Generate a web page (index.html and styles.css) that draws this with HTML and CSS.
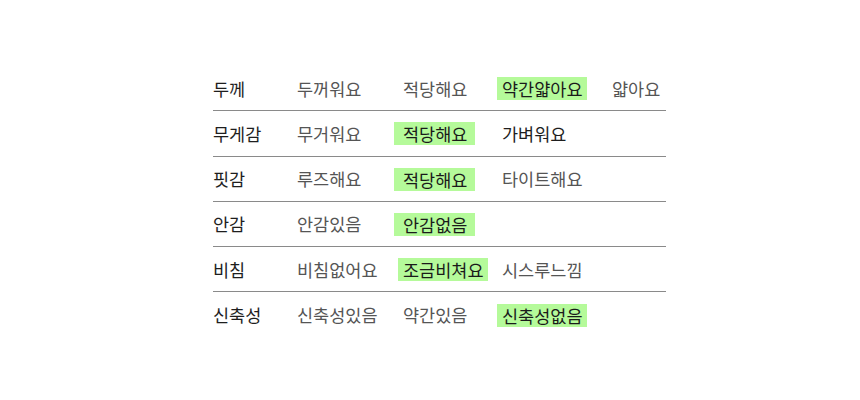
FILE: index.html
```html
<!DOCTYPE html>
<html lang="ko">
<head>
<meta charset="utf-8">
<link rel="stylesheet" href="styles.css">
</head>
<body>
<div class="page">
  <div class="table">
    <div class="row">
      <div class="cell label">두께</div>
      <div class="cell">두꺼워요</div>
      <div class="cell">적당해요</div>
      <div class="cell"><span class="hl">약간얇아요</span></div>
      <div class="cell">얇아요</div>
    </div>
    <div class="row">
      <div class="cell label">무게감</div>
      <div class="cell">무거워요</div>
      <div class="cell"><span class="hl wide">적당해요</span></div>
      <div class="cell dark">가벼워요</div>
      <div class="cell"></div>
    </div>
    <div class="row">
      <div class="cell label">핏감</div>
      <div class="cell">루즈해요</div>
      <div class="cell"><span class="hl wide">적당해요</span></div>
      <div class="cell">타이트해요</div>
      <div class="cell"></div>
    </div>
    <div class="row">
      <div class="cell label">안감</div>
      <div class="cell">안감있음</div>
      <div class="cell"><span class="hl wide">안감없음</span></div>
      <div class="cell"></div>
      <div class="cell"></div>
    </div>
    <div class="row">
      <div class="cell label">비침</div>
      <div class="cell">비침없어요</div>
      <div class="cell"><span class="hl">조금비쳐요</span></div>
      <div class="cell">시스루느낌</div>
      <div class="cell"></div>
    </div>
    <div class="row last">
      <div class="cell label">신축성</div>
      <div class="cell">신축성있음</div>
      <div class="cell">약간있음</div>
      <div class="cell"><span class="hl">신축성없음</span></div>
      <div class="cell"></div>
    </div>
  </div>
</div>
</body>
</html>
```

FILE: styles.css
```css
html, body {
  margin: 0;
  padding: 0;
  background: #ffffff;
}

body {
  font-family: "Noto Sans CJK KR", "Noto Sans", sans-serif;
  font-size: 17.5px;
  color: #555555;
}

.page {
  padding-top: 66px;
  padding-left: 213px;
}

.table {
  width: 453px;
  display: flex;
  flex-direction: column;
}

.row {
  display: grid;
  grid-template-columns: 84px 106px 99px 110px 54px;
  height: 45.25px;
  box-sizing: border-box;
  align-items: center;
  border-bottom: 1px solid #8a8a8a;
}

.row.last {
  border-bottom: none;
}

.cell {
  white-space: nowrap;
  line-height: 22px;
  padding-top: 1px;
}

.label {
  color: #1e1e1e;
}

.dark {
  color: #1e1e1e;
}

.hl {
  display: inline-block;
  background: #b5fa9a;
  color: #1a1a1a;
  line-height: 23px;
  padding: 0 4px 0 5px;
  margin-left: -5px;
}

.hl.wide {
  padding: 0 8px 0 9px;
  margin-left: -9px;
}
```
